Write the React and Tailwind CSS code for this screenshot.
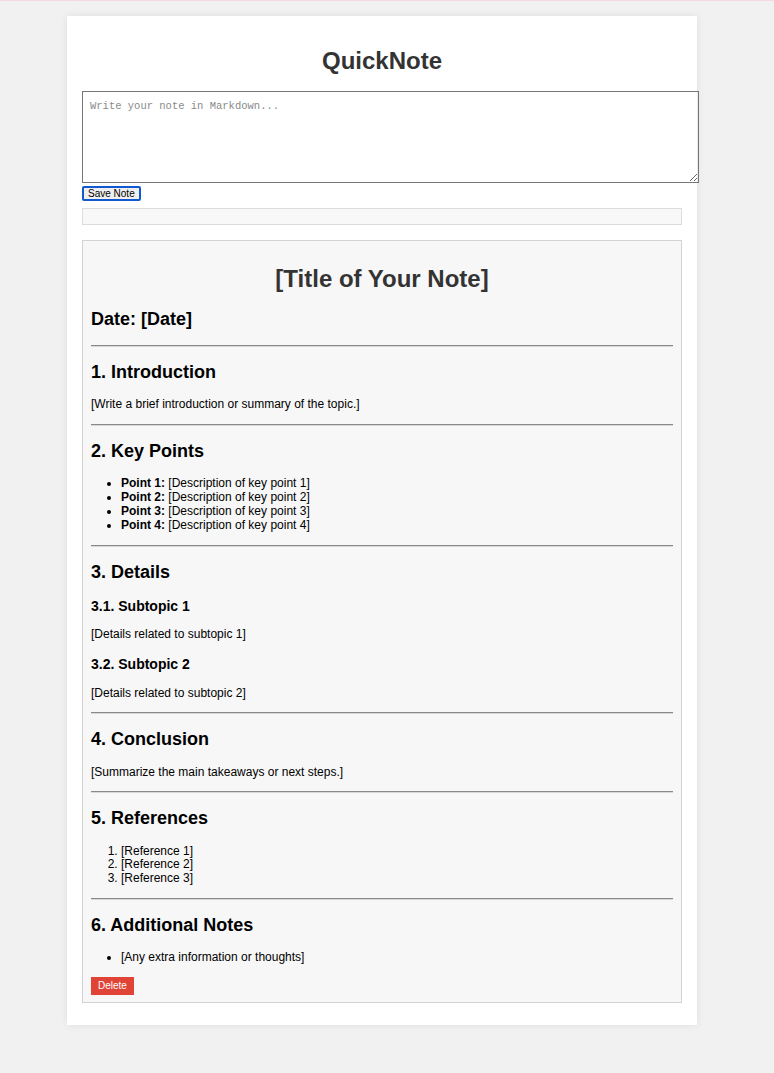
export default function App() {
  const h2 = "text-[18px] leading-[21.2px] font-bold text-black";
  const p = "text-[12px] leading-[1.15] text-black";
  const hr = "border-0 border-t border-b border-t-[#8a8a8a] border-b-[#d8d8d8] h-0 my-[6px]";
  const h3 = "text-[14px] leading-[16.5px] font-bold text-black mt-[14px] mb-[14px]";
  return (
    <div className="min-h-[1073px] bg-[#f1f1f1] font-['Liberation_Sans',Arial,sans-serif]">
      <div className="h-px bg-[#f4d9e4]" />
      <div className="w-[630px] ml-[67px] mt-[15px] bg-white shadow-[0_0_8px_rgba(0,0,0,0.08)] px-[15px] pt-[15px] pb-[22px] flow-root">
        <h1 className="text-[24px] leading-[28px] font-bold text-[#333] text-center mt-[16px] mb-[16px]">QuickNote</h1>
        <textarea
          placeholder="Write your note in Markdown..."
          className="block w-[617px] h-[92px] border border-[#767676] px-[7px] py-[7px] text-[10.5px] font-['Liberation_Mono',monospace] placeholder:text-[#8a8a8a] resize-y outline-none"
        />
        <button className="block mt-[3px] h-[15px] px-[4px] border-2 border-[#1259d1] rounded-[2px] bg-[#efefef] text-[10px] leading-[11px] text-black">
          Save Note
        </button>
        <div className="mt-[7px] h-[17px] border border-[#dcdcdc] bg-[#f8f8f8]" />
        <div className="mt-[15px] border border-[#d3d3d3] bg-[#f7f7f7] px-[8px] pt-[8px] pb-[7px] flow-root">
          <h1 className="text-[24px] leading-[28px] font-bold text-[#333] text-center mt-[16px] mb-[16px]">[Title of Your Note]</h1>
          <h2 className={`${h2} mb-[15px]`}>Date: [Date]</h2>
          <hr className={hr} />
          <h2 className={`${h2} mt-[15px] mb-[15px]`}>1. Introduction</h2>
          <p className={`${p} mb-[12px]`}>[Write a brief introduction or summary of the topic.]</p>
          <hr className={hr} />
          <h2 className={`${h2} mt-[15px] mb-[15px]`}>2. Key Points</h2>
          <ul className={`${p} list-disc pl-[30px] mb-[12px]`}>
            <li><b>Point 1:</b> [Description of key point 1]</li>
            <li><b>Point 2:</b> [Description of key point 2]</li>
            <li><b>Point 3:</b> [Description of key point 3]</li>
            <li><b>Point 4:</b> [Description of key point 4]</li>
          </ul>
          <hr className={hr} />
          <h2 className={`${h2} mt-[15px] mb-[15px]`}>3. Details</h2>
          <h3 className={h3}>3.1. Subtopic 1</h3>
          <p className={`${p} mb-[12px]`}>[Details related to subtopic 1]</p>
          <h3 className={h3}>3.2. Subtopic 2</h3>
          <p className={`${p} mb-[12px]`}>[Details related to subtopic 2]</p>
          <hr className={hr} />
          <h2 className={`${h2} mt-[15px] mb-[15px]`}>4. Conclusion</h2>
          <p className={`${p} mb-[12px]`}>[Summarize the main takeaways or next steps.]</p>
          <hr className={hr} />
          <h2 className={`${h2} mt-[15px] mb-[15px]`}>5. References</h2>
          <ol className={`${p} list-decimal pl-[30px] mb-[12px]`}>
            <li>[Reference 1]</li>
            <li>[Reference 2]</li>
            <li>[Reference 3]</li>
          </ol>
          <hr className={hr} />
          <h2 className={`${h2} mt-[15px] mb-[15px]`}>6. Additional Notes</h2>
          <ul className={`${p} list-disc pl-[30px] mb-[12px]`}>
            <li>[Any extra information or thoughts]</li>
          </ul>
          <button className="block h-[18px] px-[7px] bg-[#e04436] text-white text-[10px] leading-[18px]">Delete</button>
        </div>
      </div>
    </div>
  );
}
